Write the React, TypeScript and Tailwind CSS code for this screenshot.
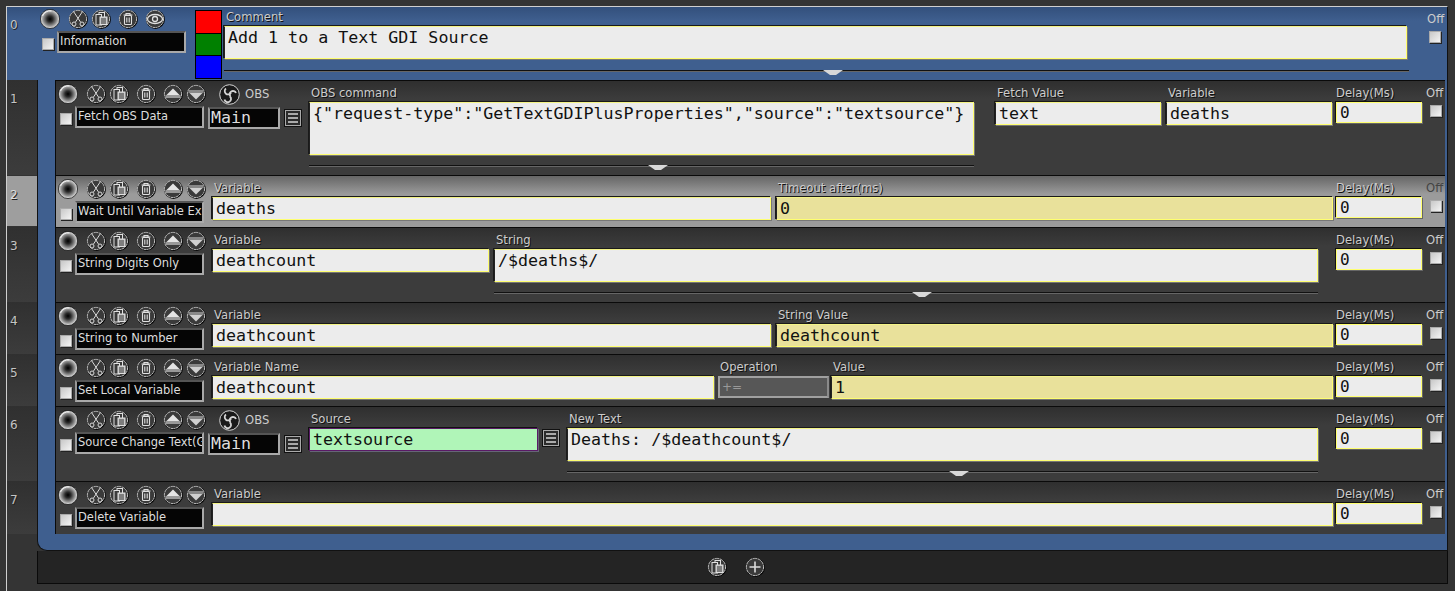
import React from 'react';

type IconName = 'cut' | 'copy' | 'trash' | 'eye' | 'up' | 'down' | 'plus';

const Orb = () => (
  <svg width="20" height="20" viewBox="0 0 20 20" className="shrink-0">
    <defs>
      <radialGradient id="orbFill" cx="50%" cy="50%" r="50%">
        <stop offset="0%" stopColor="#000" />
        <stop offset="30%" stopColor="#2a2a2a" />
        <stop offset="70%" stopColor="#909090" />
        <stop offset="100%" stopColor="#e8e8e8" />
      </radialGradient>
    </defs>
    <circle cx="10" cy="10" r="9.6" fill="url(#orbFill)" stroke="#0a0a0a" strokeWidth="0.7" />
    <path d="M2.500 7a8 8 0 0 1 9-5" fill="none" stroke="#f4f4f4" strokeWidth="1" />
  </svg>
);

const RoundIcon = ({ name, className = '' }: { name: IconName; className?: string }) => (
  <svg width="20" height="20" viewBox="0 0 20 20" className={`shrink-0 ${className}`}>
    <circle cx="10.400" cy="10.400" r="9.500" fill="#000" />
    <circle cx="10" cy="10" r="8.600" fill="#3a3a3a" stroke="#e0e0e0" strokeWidth="0.9" strokeDasharray="2.200 0.500" />
    {name === 'cut' && (
      <g fill="none" stroke="#d8d8d8" strokeWidth="1">
        <path d="M5.500 2.500l7 10.500M14.500 2.500l-7 10.500" />
        <circle cx="6" cy="15" r="2" />
        <circle cx="14" cy="15" r="2" />
      </g>
    )}
    {name === 'copy' && (
      <g stroke="#e0e0e0" strokeWidth="1" fill="#3a3a3a">
        <rect x="8" y="3.500" width="5.500" height="5" />
        <rect x="5" y="5.500" width="5.500" height="10.500" />
        <rect x="9" y="8" width="7" height="7.500" fill="#bbb" />
        <path d="M10 10h5M10 12h5M10 14h5" stroke="#333" strokeWidth="0.900" />
      </g>
    )}
    {name === 'trash' && (
      <g stroke="#e0e0e0" strokeWidth="1.100" fill="none">
        <path d="M5.500 6h9M8 6V4.500h4V6" />
        <rect x="6.500" y="6.500" width="7" height="9" rx="1" />
        <path d="M8.800 8.500v5M11.200 8.500v5" />
      </g>
    )}
    {name === 'eye' && (
      <g stroke="#e0e0e0" strokeWidth="1.300" fill="none">
        <ellipse cx="10" cy="10" rx="7.500" ry="4.500" />
        <circle cx="10" cy="10" r="2.500" />
      </g>
    )}
    {name === 'up' && (
      <g>
        <path d="M10 4.500l6.500 6.500H3.500z" fill="#e4e4e4" />
        <rect x="2.500" y="11" width="15" height="3" fill="#999" />
      </g>
    )}
    {name === 'down' && (
      <g>
        <rect x="2.500" y="6" width="15" height="3" fill="#888" />
        <path d="M3.500 9h13l-6.500 6.500z" fill="#d0d0d0" />
      </g>
    )}
    {name === 'plus' && <path d="M10 4.500v11M4.500 10h11" stroke="#ddd" strokeWidth="1.600" />}
  </svg>
);

const ObsLogo = () => (
  <svg width="21" height="21" viewBox="0 0 21 21" className="shrink-0">
    <circle cx="10.500" cy="10.500" r="9.800" fill="#1a1a1a" stroke="#d4d4d4" strokeWidth="1" />
    <g fill="none" stroke="#d4d4d4" strokeWidth="1.800">
      <path d="M7 4.500a3.300 3.300 0 1 0 5 4" />
      <path d="M17 9a3.300 3.300 0 1 0-5.500 3.500" />
      <path d="M5.500 15.500a3.300 3.300 0 1 0 5.500-3" />
    </g>
  </svg>
);

const Checkbox = ({ className = '' }: { className?: string }) => (
  <div className={`w-[12px] h-[12px] shrink-0 bg-gradient-to-br from-[#c8c8c8] to-[#f4f4f4] border border-[#aaa] shadow-[1px_1px_0_#222] ${className}`} />
);

const NameBox = ({ text, className = '' }: { text: string; className?: string }) => (
  <div className={`h-[22px] bg-[#050505] border-2 border-[#a9a9a9] border-t-[#555] border-l-[#999] px-[1px] text-[11.5px] leading-[17px] text-[#ddd] overflow-hidden whitespace-nowrap ${className}`}>
    {text}
  </div>
);

const Label = ({ children }: { children: React.ReactNode }) => (
  <div className="h-[16px] text-[11.6px] leading-[15px] text-[#ccc] pl-[2px] whitespace-nowrap [text-shadow:1px_1px_0_#111]">{children}</div>
);

const Field = ({
  label,
  value = '',
  h = 23,
  bg = 'bg-[#ececec]',
  className = '',
  boxClass = 'border border-[#ffff70] border-l-[#222] border-t-[#f4f486] shadow-[1px_1px_0_#777,-1px_-1px_0_#1a1a1a]',
}: {
  label: string;
  value?: string;
  h?: 23 | 33 | 53;
  bg?: string;
  className?: string;
  boxClass?: string;
}) => (
  <div className={`min-w-0 ${className}`}>
    <Label>{label}</Label>
    <div
      className={`${h === 23 ? 'h-[23px]' : h === 33 ? 'h-[33px]' : 'h-[53px]'} ${bg} ${boxClass} px-[3px] font-['DejaVu_Sans_Mono',monospace] text-[16.65px] leading-[21px] text-[#111] whitespace-nowrap overflow-hidden`}
    >
      {value}
    </div>
  </div>
);

const Collapse = ({ className = '' }: { className?: string }) => (
  <div className={`h-[5px] border-t border-[#111] shadow-[inset_0_1px_0_#666] flex justify-center pl-[32px] ${className}`}>
    <svg width="20" height="7" viewBox="0 0 20 7" className="-mt-[1px]">
      <path d="M0 0h20l-7 5h-6z" fill="#d8d8d8" />
    </svg>
  </div>
);

const Hamburger = () => (
  <div className="w-[18px] h-[18px] shrink-0 bg-[#2b2b2b] border border-[#111] shadow-[inset_0_0_0_1px_#aaa] flex flex-col justify-center gap-[2px] px-[3px]">
    <div className="h-[2px] bg-[#aaa]" />
    <div className="h-[2px] bg-[#aaa]" />
    <div className="h-[2px] bg-[#aaa]" />
  </div>
);

const ToolIcons = () => (
  <div className="flex">
    <Orb />
    <RoundIcon name="cut" className="ml-[8px]" />
    <RoundIcon name="copy" className="ml-[3px]" />
    <RoundIcon name="trash" className="ml-[7px]" />
    <RoundIcon name="up" className="ml-[7px]" />
    <RoundIcon name="down" className="ml-[3px]" />
  </div>
);

const Controls = ({ name }: { name: string }) => (
  <div className="w-[152px] shrink-0 pl-[2px] pt-[3px]">
    <ToolIcons />
    <div className="flex items-center mt-[2px] pl-[2px]">
      <Checkbox className="mt-[3px]" />
      <NameBox text={name} className="w-[129px] ml-[3px] shrink-0" />
    </div>
  </div>
);

const ObsColumn = () => (
  <div className="w-[94px] shrink-0 pt-[2px]">
    <div className="flex items-center h-[23px] pl-[11px]">
      <ObsLogo />
      <span className="ml-[5px] text-[11.6px] text-[#ccc]">OBS</span>
    </div>
    <div className="flex items-center mt-[1px]">
      <div className="w-[72px] h-[22px] shrink-0 bg-[#050505] border-2 border-[#a9a9a9] border-t-[#555] border-l-[#999] px-[1px] font-['DejaVu_Sans_Mono',monospace] text-[16.65px] leading-[18px] text-[#ddd]">Main</div>
      <div className="ml-[4px]">
        <Hamburger />
      </div>
    </div>
  </div>
);

const DelayOff = ({ active = false }: { active?: boolean }) => (
  <div className="flex shrink-0">
    <div className="w-[86px] ml-[3px] pt-[5px]">
      <div className="h-[16px] text-[11.6px] leading-[15px] text-[#ccc] whitespace-nowrap [text-shadow:1px_1px_0_#111]">Delay(Ms)</div>
      <div className="h-[21px] bg-[#ececec] border border-[#ffff70] shadow-[1px_1px_0_#666,-1px_-1px_0_#111] px-[3px] font-['DejaVu_Sans_Mono',monospace] text-[16px] leading-[19px] text-[#111]">0</div>
    </div>
    <div className="w-[23px] pl-[4px] pt-[5px]">
      <div className={`h-[16px] text-[11.6px] leading-[15px] ${active ? 'text-[#444]' : 'text-[#ccc]'}`}>Off</div>
      <Checkbox className="mt-[3px] ml-[4px]" />
    </div>
  </div>
);

const Row = ({
  index,
  active = false,
  h,
  children,
}: {
  index: number;
  active?: boolean;
  h: string;
  children: React.ReactNode;
}) => (
  <div className={`flex ${h}`}>
    <div className={`w-[30px] shrink-0 pl-[3px] pt-[12px] text-[12px] leading-[14px] [text-shadow:1px_1px_0_#222] ${active ? 'text-[#ddd] bg-[#9e9e9e] border-y border-[#333]' : 'text-[#c4c4c4] bg-gradient-to-b from-[#303030] to-[#3c3c3c]'}`}>
      {index}
    </div>
    <div className="w-[1px] shrink-0 bg-[#111]" />
    <div className="w-[17px] shrink-0 bg-[#3f5f8f]" />
    <div className={`flex-1 min-w-0 flex border-l border-t border-[#0a0a0a] ${active ? 'bg-gradient-to-b from-[#666] to-[#9b9b9b] to-[18px]' : 'bg-gradient-to-b from-[#2f2f2f] to-[#3c3c3c] to-[18px]'}`}>
      {children}
    </div>
    <div className="w-[2px] shrink-0 bg-[#3f5f8f]" />
    <div className="w-[1px] shrink-0 bg-[#111]" />
  </div>
);

const Mid = ({ children, plain = false }: { children: React.ReactNode; plain?: boolean }) => (
  <div className={`flex-1 min-w-0 flex pt-[5px] ${plain ? 'pl-[4px]' : ''}`}>{children}</div>
);

const ToolIconsTop = () => (
  <div className="flex">
    <Orb />
    <RoundIcon name="cut" className="ml-[8px]" />
    <RoundIcon name="copy" className="ml-[3px]" />
    <RoundIcon name="trash" className="ml-[7px]" />
    <RoundIcon name="eye" className="ml-[7px]" />
  </div>
);

const App = () => {
  return (
    <div className="w-[1455px] h-[591px] overflow-hidden bg-[#343434] pt-[6px] pl-[6px] font-['DejaVu_Sans',sans-serif]">
      <div className="w-[1442px] h-[585px] border-l border-[#cfcfcf] flex flex-col">
        {/* Top group row */}
        <div className="flex h-[74px] border-t border-[#cfcfcf] border-r border-r-[#111] bg-gradient-to-b from-[#33507c] to-[#3f5f8f] to-[14px]">
          <div className="w-[31px] shrink-0 pl-[3px] pt-[11px] text-[12px] leading-[14px] text-[#c4c4c4] [text-shadow:1px_1px_0_#222]">0</div>
          <div className="w-[150px] shrink-0 pt-[2px] pl-[2px]">
            <ToolIconsTop />
            <div className="flex items-center mt-[2px] pl-[2px]">
              <Checkbox className="mt-[3px]" />
              <NameBox text="Information" className="w-[129px] ml-[3px] shrink-0" />
            </div>
          </div>
          <div className="w-[27px] shrink-0 ml-[7px] mt-[3px] h-[69px] border border-black flex flex-col">
            <div className="h-[23px] bg-[#ff0000] border-b border-black" />
            <div className="h-[22px] bg-[#008000] border-b border-black" />
            <div className="flex-1 bg-[#0000ff]" />
          </div>
          <div className="w-[1185px] shrink-0 ml-[2px] pt-[3px]">
            <Field label="Comment" value="Add 1 to a Text GDI Source" h={33} className="mr-[2px]" />
            <Collapse className="mt-[11px]" />
          </div>
          <div className="pl-[18px] pt-[5px]">
            <div className="h-[16px] text-[11.6px] leading-[15px] text-[#ccc]">Off</div>
            <Checkbox className="mt-[3px] ml-[2px]" />
          </div>
        </div>

        <Row index={1} h="h-[95px]">
          <Controls name="Fetch OBS Data" />
          <ObsColumn />
          <Mid>
            <div className="w-[665px] ml-[7px] shrink-0">
              <Field label="OBS command" value={'{"request-type":"GetTextGDIPlusProperties","source":"textsource"}'} h={53} />
              <Collapse className="mt-[10px]" />
            </div>
            <Field label="Fetch Value" value="text" className="w-[166px] ml-[21px] shrink-0" />
            <Field label="Variable" value="deaths" className="w-[166px] ml-[5px] shrink-0" />
          </Mid>
          <DelayOff />
        </Row>

        <Row index={2} active h="h-[52px]">
          <Controls name="Wait Until Variable Exists" />
          <Mid plain>
            <Field label="Variable" value="deaths" className="w-[559px] shrink-0" />
            <Field label="Timeout after(ms)" value="0" bg="bg-[#e9e19b]" className="flex-1 ml-[5px]" />
          </Mid>
          <DelayOff active />
        </Row>

        <Row index={3} h="h-[75px]">
          <Controls name="String Digits Only" />
          <Mid plain>
            <Field label="Variable" value="deathcount" className="w-[277px] shrink-0" />
            <div className="w-[824px] ml-[5px] shrink-0">
              <Field label="String" value="/$deaths$/" h={33} />
              <Collapse className="mt-[10px]" />
            </div>
          </Mid>
          <DelayOff />
        </Row>

        <Row index={4} h="h-[52px]">
          <Controls name="String to Number" />
          <Mid plain>
            <Field label="Variable" value="deathcount" className="w-[559px] shrink-0" />
            <Field label="String Value" value="deathcount" bg="bg-[#e9e19b]" className="flex-1 ml-[5px]" />
          </Mid>
          <DelayOff />
        </Row>

        <Row index={5} h="h-[52px]">
          <Controls name="Set Local Variable" />
          <Mid plain>
            <Field label="Variable Name" value="deathcount" className="w-[502px] shrink-0" />
            <div className="w-[111px] ml-[4px] shrink-0">
              <Label>Operation</Label>
              <div className="h-[22px] bg-[#575757] border-2 border-[#a0a0a0] border-r-[#8a8a8a] px-[2px] text-[12px] leading-[18px] text-[#999]">+=</div>
            </div>
            <Field label="Value" value="1" bg="bg-[#e9e19b]" className="flex-1 ml-[2px]" />
          </Mid>
          <DelayOff />
        </Row>

        <Row index={6} h="h-[75px]">
          <Controls name="Source Change Text(GDI)" />
          <ObsColumn />
          <Mid>
            <Field
              label="Source"
              value="textsource"
              bg="bg-[#b0f5b8]"
              boxClass="border border-[#5a1a66] shadow-[1px_1px_0_#667,-1px_-1px_0_#111]"
              className="w-[229px] ml-[7px] shrink-0"
            />
            <div className="ml-[4px] mt-[17px] shrink-0">
              <Hamburger />
            </div>
            <div className="w-[751px] ml-[7px] shrink-0">
              <Field label="New Text" value="Deaths: /$deathcount$/" h={33} />
              <Collapse className="mt-[10px]" />
            </div>
          </Mid>
          <DelayOff />
        </Row>

        <Row index={7} h="h-[53px]">
          <Controls name="Delete Variable" />
          <Mid plain>
            <Field label="Variable" className="flex-1" />
          </Mid>
          <DelayOff />
        </Row>

        {/* Blue bottom edge */}
        <div className="flex h-[17px]">
          <div className="w-[30px] shrink-0" />
          <div className="flex-1 bg-[#3f5f8f] border-l border-b border-r border-[#111] rounded-bl-[10px]" />
        </div>

        {/* Footer */}
        <div className="flex h-[33px]">
          <div className="w-[30px] shrink-0" />
          <div className="flex-1 bg-[#242424] border-x border-b border-[#0a0a0a] flex items-center justify-center gap-[18px] pr-[14px]">
            <RoundIcon name="copy" />
            <RoundIcon name="plus" />
          </div>
        </div>
      </div>
    </div>
  );
};

export default App;
